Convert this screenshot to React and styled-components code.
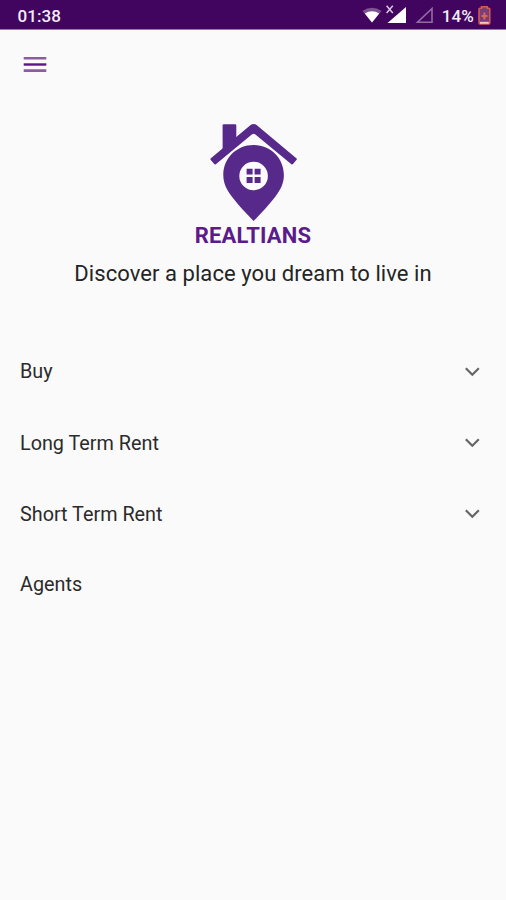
import React, { useState } from "react";
import styled, { createGlobalStyle } from "styled-components";

const GlobalStyle = createGlobalStyle`
  * {
    box-sizing: border-box;
  }
  body {
    margin: 0;
    background: #fafafa;
    font-family: Roboto, "Liberation Sans", sans-serif;
  }
`;

const Screen = styled.div`
  width: 100%;
  height: 900px;
  background: #fafafa;
  overflow: hidden;
`;

const StatusBar = styled.header`
  display: flex;
  justify-content: space-between;
  height: 30px;
  padding: 0 15px 0 17.5px;
  background: #42055f;
  border-bottom: 1px solid #957aa4;
`;

const StatusText = styled.span`
  color: #f3edf6;
  font-size: 17px;
  font-weight: 500;
  line-height: 32px;
  letter-spacing: 0.1px;
`;

const StatusIcons = styled.div`
  display: flex;
`;

const Toolbar = styled.nav`
  height: 70px;
  padding: 26px 23px;
`;

const MenuButton = styled.button`
  display: block;
  padding: 0;
  border: none;
  background: none;
  cursor: pointer;
`;

const Brand = styled.section`
  display: flex;
  flex-direction: column;
  align-items: center;
  height: 236px;
  padding-top: 22px;
`;

const Title = styled.h1`
  margin: 1px 0 0;
  color: #5c1a8b;
  font-size: 22px;
  font-weight: 700;
  line-height: 26px;
  letter-spacing: 0.2px;
`;

const Tagline = styled.p`
  margin: 12px 0 0;
  color: #242424;
  font-size: 22px;
  line-height: 26px;
  letter-spacing: 0.06px;
`;

const Menu = styled.ul`
  margin: 0;
  padding: 0;
  list-style: none;
`;

const MenuItem = styled.li`
  display: flex;
  justify-content: space-between;
  align-items: center;
  height: ${(props) => (props.$expandable ? "71.4px" : "69px")};
  padding: 0 26px 0 20px;
  color: #2b2b2b;
  font-size: 19.8px;
  cursor: pointer;
`;

const Chevron = styled.svg`
  transform: rotate(${(props) => (props.$open ? "180deg" : "0deg")});
`;

const items = [
  { name: "Buy", expandable: true },
  { name: "Long Term Rent", expandable: true },
  { name: "Short Term Rent", expandable: true },
  { name: "Agents", expandable: false },
];

function SignalIcons() {
  return (
    <svg width="80" height="29" viewBox="362 0 80 29">
      {/* wifi */}
      <path d="M362.5 11 Q372 4.5 381.5 11 L372 22.5Z" fill="#7d5391" />
      <path d="M364.8 13.4 Q372 9 379.2 13.4 L372 22.5Z" fill="#fff" />
      {/* mobile networks */}
      <path d="M386.6 5.8 L392.8 13 M392.8 5.8 L386.6 13" stroke="#d8c9df" strokeWidth="1.5" />
      <path d="M406 7 V23 H387.5Z" fill="#fff" />
      <path d="M432 8.5 V22.2 H417.5Z" fill="none" stroke="#926da4" strokeWidth="1.6" />
    </svg>
  );
}

const Battery = styled.svg`
  margin-left: 3px;
`;

function BatteryIcon() {
  return (
    <Battery width="14" height="29" viewBox="477 0 14 29">
      <path
        d="M481.5 6.8 H487.3 V8.3 H489 Q489.8 8.3 489.8 9.2 V23 Q489.8 24 488.8 24 H480 Q479 24 479 23 V9.2 Q479 8.3 479.9 8.3 H481.5Z"
        fill="#754079"
        stroke="#d95950"
        strokeWidth="1.5"
      />
      <path d="M480 22.8 H488.8" stroke="#f5c5c4" strokeWidth="2" />
      <path d="M484.4 12.5 V19.5 M481.5 16 H487.4" stroke="#e3625b" strokeWidth="2" />
    </Battery>
  );
}

function Logo() {
  return (
    <svg width="90" height="100" viewBox="208.2 122 90 100">
      <path d="M222.8 151 V125.5 Q222.8 124.2 224 124.2 H235.2 Q236.5 124.2 236.5 125.5 V140Z" fill="#57298a" />
      <path
        d="M210.8 158.6 L250.8 125 Q253.8 122.8 256.8 125 L296.8 158.6 Q297.3 159.2 296.8 159.8 L293.2 164 Q292.4 164.8 291.6 164.2 L255.6 134.4 Q253.8 133 252 134.4 L216 164.2 Q215.2 164.8 214.4 164 L210.8 159.8 Q210.3 159.2 210.8 158.6Z"
        fill="#57298a"
      />
      <path
        d="M253.8 145 C236.5 145 223.5 158.5 223.5 175 C223.5 183.5 227 190 232 196.5 C238 204.5 247 214 253.8 221 C260.6 214 269.6 204.5 275.6 196.5 C280.6 190 284.1 183.5 284.1 175 C284.1 158.5 271.1 145 253.8 145Z"
        fill="#57298a"
      />
      <circle cx="253.8" cy="176" r="14.3" fill="#fcfbfd" />
      <path d="M246.8 168.8 h6 v5.6 h-6z M254.8 168.8 h6 v5.6 h-6z M246.8 176.9 h6 v6 h-6z M254.8 176.9 h6 v6 h-6z" fill="#57298a" />
    </svg>
  );
}

function App() {
  const [open, setOpen] = useState(null);

  return (
    <>
      <GlobalStyle />
      <Screen>
        <StatusBar>
          <StatusText>01:38</StatusText>
          <StatusIcons>
            <SignalIcons />
            <StatusText>14%</StatusText>
            <BatteryIcon />
          </StatusIcons>
        </StatusBar>
        <Toolbar>
          <MenuButton aria-label="Menu">
            <svg width="24" height="18" viewBox="0 0 24 18" display="block">
              <path d="M0.7 2.3 H23.3 M0.7 14.6 H23.3" stroke="#8b5ba8" strokeWidth="2.6" />
              <path d="M0.7 8.5 H23.3" stroke="#5c1486" strokeWidth="2.4" />
            </svg>
          </MenuButton>
        </Toolbar>
        <Brand>
          <Logo />
          <Title>REALTIANS</Title>
          <Tagline>Discover a place you dream to live in</Tagline>
        </Brand>
        <Menu>
          {items.map((item) => (
            <MenuItem
              key={item.name}
              $expandable={item.expandable}
              onClick={() => setOpen(open === item.name ? null : item.name)}
            >
              {item.name}
              {item.expandable && (
                <Chevron width="16" height="12" viewBox="0 0 16 12" $open={open === item.name}>
                  <path d="M1.8 2.2 L8.3 8.7 L14.8 2.2" fill="none" stroke="#656565" strokeWidth="2.2" />
                </Chevron>
              )}
            </MenuItem>
          ))}
        </Menu>
      </Screen>
    </>
  );
}

export default App;
